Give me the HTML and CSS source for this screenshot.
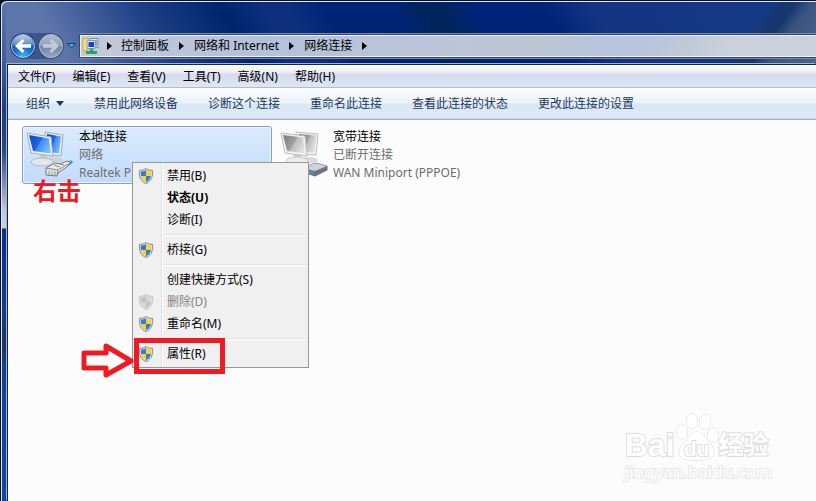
FILE: index.html
```html
<!DOCTYPE html>
<html lang="zh-CN">
<head>
<meta charset="utf-8">
<title>网络连接</title>
<link rel="stylesheet" href="styles.css">
</head>
<body>
<svg class="defs" width="0" height="0" aria-hidden="true">
  <defs>
    <linearGradient id="screen" x1="0" y1=".2" x2="1" y2=".7"><stop offset="0" stop-color="#0b49cf"/><stop offset=".45" stop-color="#1f66e4"/><stop offset=".5" stop-color="#3b8bf5"/><stop offset="1" stop-color="#86c0fb"/></linearGradient>
    <linearGradient id="screenOff" x1="0" y1=".2" x2="1" y2=".7"><stop offset="0" stop-color="#7f7f7f"/><stop offset=".48" stop-color="#a2a2a2"/><stop offset=".52" stop-color="#bdbdbd"/><stop offset="1" stop-color="#e2e2e2"/></linearGradient>
    <radialGradient id="back" cx=".5" cy="1" r=".95"><stop offset="0" stop-color="#39c4f5"/><stop offset=".5" stop-color="#1668c4"/><stop offset="1" stop-color="#1b4a96"/></radialGradient>
    <linearGradient id="gloss" x1="0" y1="0" x2="0" y2="1"><stop offset="0" stop-color="#fff" stop-opacity=".75"/><stop offset="1" stop-color="#fff" stop-opacity=".2"/></linearGradient>
    <linearGradient id="fwd" x1="0" y1="0" x2="0" y2="1"><stop offset="0" stop-color="#b3bccd"/><stop offset=".48" stop-color="#95a2ba"/><stop offset=".52" stop-color="#7285a8"/><stop offset="1" stop-color="#94a5c4"/></linearGradient>
    <clipPath id="shieldClip"><path d="M8 2C6.500 3 4.500 3.600 2.800 3.600C2.500 8 3.500 12 8 14.200C12.500 12 13.500 8 13.200 3.600C11.500 3.600 9.500 3 8 2Z"/></clipPath>
    <symbol id="shield" viewBox="0 0 16 16">
      <path d="M8 .5C6 1.900 4 2.400 1.500 2.400C.8 8 2.400 13.300 8 15.600C13.600 13.300 15.200 8 14.500 2.400C12 2.400 10 1.900 8 .5Z" fill="#d9dde2" stroke="#858b94"/>
      <g clip-path="url(#shieldClip)"><path fill="#2f7ed4" d="M0 0h8v8H0zM8 8h8v8H8z"/><path fill="#fcd32c" d="M8 0h8v8H8zM0 8h8v8H0z"/></g>
    </symbol>
    <symbol id="shieldOff" viewBox="0 0 16 16">
      <path d="M8 .5C6 1.900 4 2.400 1.500 2.400C.8 8 2.400 13.300 8 15.600C13.600 13.300 15.200 8 14.500 2.400C12 2.400 10 1.900 8 .5Z" fill="#e2e2e2" stroke="#c4c4c4"/>
      <g clip-path="url(#shieldClip)"><path fill="#c2c2c2" d="M0 0h8v8H0zM8 8h8v8H8z"/><path fill="#d6d6d6" d="M8 0h8v8H8zM0 8h8v8H0z"/></g>
    </symbol>
  </defs>
</svg>
<div class="window">
  <header class="titlebar">
    <div class="nav">
      <div class="pill">
        <button class="round" aria-label="后退"><svg width="26" height="26" viewBox="0 0 26 26"><circle cx="13" cy="13" r="12.500" fill="#14285a"/><circle cx="13" cy="13" r="11.500" fill="url(#back)" stroke="#b8cbea"/><path d="M2.500 12a10.500 10 0 0 1 21 0Q13 15 2.500 12Z" fill="url(#gloss)"/><path d="M5 13l7.500-7 2 2-3 3.200H21v3.600h-9.500l3 3.200-2 2Z" fill="#fff"/></svg></button>
        <button class="round" aria-label="前进"><svg width="26" height="26" viewBox="0 0 26 26"><circle cx="13" cy="13" r="12.500" fill="#34496f"/><circle cx="13" cy="13" r="11.500" fill="url(#fwd)" stroke="#b4bfd3"/><path d="M21 13l-7.500-7-2 2 3 3.200H5v3.600h9.500l-3 3.200 2 2Z" fill="#c3cbdb"/></svg></button>
      </div>
      <button class="recent" aria-label="最近的位置"><svg width="9" height="6" viewBox="0 0 9 6"><path d="M.5.5h8l-4 4.500Z" fill="#4ba8dc" stroke="#143a72"/></svg></button>
    </div>
    <nav class="address" aria-label="地址">
      <svg width="18" height="18" viewBox="0 0 18 18"><path d="M1 2l5-1v12l-5 1Z" fill="#f7df83" stroke="#d2ad45"/><path d="M8 1.500h8v9H8Z" fill="#dce1e8" stroke="#7e8da2"/><path d="M9.500 3H15v6H9.500Z" fill="#8ba5dc"/><path d="M5 3.500h8v8H5Z" fill="#e9edf3" stroke="#8796ad"/><path d="M6.500 5H12v5H6.500Z" fill="#1744d2"/><path d="M8 12h3v2h4v3H4v-3h4Z" fill="#24a765"/></svg>
      <i class="sep"></i><a href="#">控制面板</a><i class="sep"></i><a href="#">网络和 Internet</a><i class="sep"></i><a href="#">网络连接</a><i class="sep"></i>
    </nav>
  </header>
  <div class="client">
    <nav class="menubar"><button>文件(F)</button><button>编辑(E)</button><button>查看(V)</button><button>工具(T)</button><button>高级(N)</button><button>帮助(H)</button></nav>
    <div class="toolbar"><button>组织<i class="caret"></i></button><button>禁用此网络设备</button><button>诊断这个连接</button><button>重命名此连接</button><button>查看此连接的状态</button><button>更改此连接的设置</button></div>
    <main class="items">
      <article class="item selected">
        <svg class="pic" width="50" height="52" viewBox="0 0 50 52">
          <ellipse cx="29" cy="29" rx="8" ry="3" fill="#cbd2da"/><path d="M19 1l18 3-2 21-16-2Z" fill="#e8edf2" stroke="#a1abb8"/><path d="M21 3l14 2.500-2 17-12-2Z" fill="url(#screen)"/>
          <path d="M14 23l7 1 1 5-9-1Z" fill="#c7ccd2"/><ellipse cx="16" cy="31" rx="11" ry="4" fill="#e4e7ea" stroke="#b3bbc4"/>
          <path d="M1 2l24 4 2 19L5 22Z" fill="#eef2f6" stroke="#a3adba"/><path d="M3 4l20 3.500 2 15L7 20Z" fill="url(#screen)"/>
          <path d="M38 35q5-1 8-5" fill="none" stroke="#38a9ce" stroke-width="3"/><path d="M20 37l9-5 5 1 7-3 3 1-2 4-10 7-1 3-11-1Z" fill="#e8eaeb" stroke="#737b80"/><path d="M20 37l12 2 10-6M32 39l-1 5M23 40v4M26 40v4M29 40v4M28 34l6 2M34 33l4 1" fill="none" stroke="#83898d"/><path d="M22 39l7 1v2l-7-1Z" fill="#ddd29c"/>
        </svg>
        <div class="text"><h2>本地连接</h2><p>网络</p><p>Realtek P</p></div>
      </article>
      <article class="item">
        <svg class="pic" width="50" height="52" viewBox="0 0 50 52">
          <ellipse cx="29" cy="29" rx="9" ry="3" fill="#dadada"/><path d="M16 1l22 2-2 21-18-1Z" fill="#f0f0f0" stroke="#bdbdbd"/><path d="M19 3l17 1.500-2 17-14-1Z" fill="url(#screenOff)"/>
          <path d="M14 23l7 1 1 5-9-1Z" fill="#ccc"/><ellipse cx="17" cy="30" rx="11" ry="4" fill="#eee" stroke="#c8c8c8"/>
          <path d="M1 2l24 3 2 20L5 22Z" fill="#f5f5f5" stroke="#bbb"/><path d="M3 4l20 2.500 2 16L7 20Z" fill="url(#screenOff)"/>
          <path d="M24 37l11-5 12 3v4l-12 6-11-4Z" fill="#6f767b" stroke="#646b70"/><path d="M24 37l11-5 12 3-12 5Z" fill="#d0d3d5"/><path d="M26 39l8 2v2l-8-2Z" fill="#35a1cb"/>
        </svg>
        <div class="text"><h2>宽带连接</h2><p>已断开连接</p><p>WAN Miniport (PPPOE)</p></div>
      </article>
      <div class="watermark">
        <div class="brand"><span class="latin">Bai</span><span class="paw"><svg width="44" height="48" viewBox="0 0 44 48"><g fill="#fff" stroke="#d6d6d6"><ellipse cx="7" cy="19" rx="5.500" ry="7"/><ellipse cx="17" cy="8" rx="5.500" ry="7.500"/><ellipse cx="30" cy="9" rx="5.500" ry="7.500" transform="rotate(12 30 9)"/><ellipse cx="38" cy="22" rx="5.500" ry="7"/><path d="M22 19c-6 0-8 6-12 10s-7 8-5 13 9 5 17 5 14 0 16-5-1-10-5-14-5-9-11-9Z"/></g></svg><b>du</b></span><span class="cn">经验</span></div>
        <div class="url">jingyan.baidu.com</div>
      </div>
    </main>
  </div>
  <strong class="note">右击</strong>
  <div class="context" role="menu">
    <button role="menuitem"><svg><use href="#shield"/></svg>禁用(B)</button>
    <button role="menuitem" class="default">状态(U)</button>
    <button role="menuitem">诊断(I)</button>
    <hr>
    <button role="menuitem"><svg><use href="#shield"/></svg>桥接(G)</button>
    <hr>
    <button role="menuitem">创建快捷方式(S)</button>
    <button role="menuitem" disabled><svg><use href="#shieldOff"/></svg>删除(D)</button>
    <button role="menuitem"><svg><use href="#shield"/></svg>重命名(M)</button>
    <hr>
    <button role="menuitem"><svg><use href="#shield"/></svg>属性(R)</button>
  </div>
  <svg class="arrow" width="56" height="36" viewBox="0 0 56 36"><path d="M5 10h22V3l25 15-25 14v-7H5Z" fill="none" stroke="#ed1c24" stroke-width="5" stroke-linejoin="round"/></svg>
  <div class="frame"></div>
</div>
</body>
</html>
```
FILE: styles.css
```css
* { box-sizing: border-box; }
body { margin: 0; background: #06112e; font: 12px/18px "Noto Sans", "Noto Sans CJK SC", sans-serif; color: #000; }
button { border: 0; padding: 0; background: none; font: inherit; color: inherit; white-space: nowrap; }
svg { display: block; flex: none; }
h2, p { margin: 0; font: inherit; }
.defs { position: absolute; }

.window {
  position: relative; display: flex; flex-direction: column; min-height: 100vh; overflow: hidden;
  margin-left: 1px; padding: 0 0 0 5px; border-top: 1px solid #06112e; border-radius: 6px 0 0 0;
  box-shadow: inset 1px 1px #dfe6f5;
  background:
    linear-gradient(#4a669e00, #3f5d97 60px, #1d3c82 110px, #2a4789 150px, #c5c9df 210px, #c9cce0 227px, #0b2d82 228px, #143c8c 310px, #1c3564 330px, #1c3564 345px, #164090 365px, #14479a) left / 5px 100% no-repeat,
    linear-gradient(126deg, transparent 78%, #16386f 81%, #16386f 84%, #3b5580 88%, #4a6590 100%) right top / 360px 64px no-repeat,
    linear-gradient(60deg, #5d76aa 0, #5d76aa 60px, #1c3f86 150px, #00246c 220px, #0d2f7e 255px, #0d2f7e 275px, #002474 310px, #002474 370px, #00255f 390px, #00255f 410px, #002478 435px, #002478 500px, #123482 540px, #173a86 100%) left top / 100% 64px no-repeat,
    #14479a;
}
.titlebar { display: flex; align-items: center; height: 61px; padding: 28px 0 0 4px; }
.nav { display: flex; align-items: center; width: 69px; flex: none; }
.pill { display: flex; gap: 2px; border-radius: 13px; background: #3c568c; }
.recent { padding-left: 3px; }
.address {
  display: flex; align-items: center; flex: 1; height: 24px; padding-left: 2px; white-space: nowrap;
  border: solid #34486d; border-width: 1px 0 1px 1px; box-shadow: inset 1px 1px #eef1f8, inset 0 -1px #eef1f8, 0 -1px #7587ac, 0 1px #7587ac;
  background: linear-gradient(125deg, transparent 76%, #c0cad7 82%, #cbd1dc 88%), linear-gradient(90deg, #c3cada, #b4c1db 180px, #bdc5d8 380px, #bbc6d1 460px, #b9c4de 520px, #bbc6e0);
}
.address a { color: #000; text-decoration: none; }
.sep { width: 0; margin: 0 10px 0 10px; border: solid transparent; border-width: 4px 0 4px 5px; border-left-color: #000; }
.address svg + .sep { margin: 0 9px 0 7px; }

.client { display: flex; flex-direction: column; flex: 1; margin: 2px 0 0 1px; border-left: 1px solid #14264e; border-top: 1px solid #14264e; box-shadow: -1px -1px #a2b1d0; background: #fcfcfc; }
.menubar { display: flex; align-items: center; gap: 1px; height: 23px; padding: 1px 0 0 2px; border-bottom: 1px solid #b2bad4; background: linear-gradient(#fff, #e9ecf6 8px, #d5daed 9px, #e1e6f6); }
.menubar button { padding: 0 8px; }
.toolbar { display: flex; align-items: center; gap: 30px; height: 32px; padding-left: 18px; color: #1e395b; border-bottom: 1px solid #a0afc3; background: linear-gradient(#fbfdff, #eaf3fc 15px, #dce7f5 16px, #dde9f7 29px, #cedbea); }
.toolbar button { display: flex; align-items: center; }
.caret { margin-left: 6px; border: solid transparent; border-width: 5px 4px 0; border-top-color: #1e395b; }

.items { position: relative; flex: 1; display: flex; align-items: flex-start; gap: 4px; padding: 6px 0 0 14px; }
.item { display: flex; gap: 3px; width: 250px; height: 58px; padding: 1px 3px; border: 1px solid transparent; border-radius: 3px; }
.item.selected { border-color: #7da2ce; background: linear-gradient(#dcebfc, #c1dbfc); box-shadow: inset 0 0 0 1px #eaf3fe; }
.pic { margin-top: 3px; }
.item .text { min-width: 0; white-space: nowrap; }
.item p { color: #6d6d6d; }

.watermark { position: absolute; right: 44px; bottom: 18px; color: #fff; -webkit-text-stroke: 2px #dedede; paint-order: stroke fill; }
.brand { display: flex; align-items: flex-end; height: 48px; font-size: 32px; line-height: 32px; font-weight: 700; }
.latin { font-family: "Liberation Sans", sans-serif; }
.paw { position: relative; }
.paw b { position: absolute; left: 0; right: 0; bottom: 2px; text-align: center; font: 700 21px/20px "Liberation Sans", sans-serif; }
.cn { font-size: 25px; line-height: 34px; }
.url { font-size: 17px; line-height: 22px; -webkit-text-stroke-color: #e8e8e8; }

.note { position: absolute; left: 32px; top: 175px; color: #ed1c24; font-size: 24px; line-height: 30px; }
.context { position: absolute; left: 131px; top: 161px; width: 177px; padding: 2px; border: 1px solid #979797; background: linear-gradient(90deg, transparent 28px, #e2e3e3 28px, #e2e3e3 29px, #fff 29px, #fff 30px, transparent 30px) #f0f0f0; }
.context button { position: relative; display: block; width: 100%; height: 22px; padding-left: 32px; text-align: left; }
.context button svg { position: absolute; left: 3px; top: 3px; width: 16px; height: 16px; }
.context .default { font-weight: 700; }
.context button:disabled { color: #838383; }
.context hr { height: 2px; margin: 3px 0 3px 29px; border: 0; border-top: 1px solid #e0e0e0; background: #fff; }
.arrow { position: absolute; left: 78px; top: 342px; }
.frame { position: absolute; left: 133px; top: 337px; width: 91px; height: 36px; border: 5px solid #ed1c24; }
```
